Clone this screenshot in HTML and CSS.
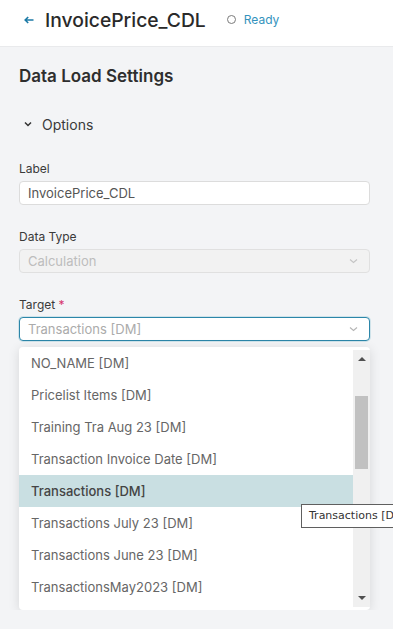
FILE: index.html
```html
<!DOCTYPE html>
<html lang="en">
<head>
  <meta charset="UTF-8" />
  <title>InvoicePrice_CDL</title>
  <link rel="stylesheet" href="styles.css">
</head>
<body>

  <!-- HEADER -->
  <div class="header">
    <svg class="back" width="10" height="8" viewBox="0 0 10 8">
      <path d="M9.5 4H1.2M4.2 1L1.2 4l3 3" fill="none" stroke="#1c7aa6" stroke-width="1.6"/>
    </svg>
    <h1 class="title">InvoicePrice_CDL</h1>
    <span class="status">
      <span class="status-dot"></span>
      Ready
    </span>
  </div>

  <!-- SETTINGS -->
  <div class="content">
    <h2 class="section-title">Data Load Settings</h2>

    <div class="options">
      <svg width="8" height="6" viewBox="0 0 8 6">
        <path d="M1 1.5l3 3 3-3" fill="none" stroke="#333" stroke-width="1.5"/>
      </svg>
      <span>Options</span>
    </div>

    <div class="field">
      <label>Label</label>
      <div class="input">InvoicePrice_CDL</div>
    </div>

    <div class="field">
      <label>Data Type</label>
      <div class="input select disabled">
        <span>Calculation</span>
        <svg width="9" height="6" viewBox="0 0 9 6"><path d="M1 1.5l3.5 3 3.5-3" fill="none" stroke="#c4c4c4" stroke-width="1.1"/></svg>
      </div>
    </div>

    <div class="field target">
      <label>Target <span class="req">*</span></label>
      <div class="input select focused">
        <span class="placeholder">Transactions [DM]</span>
        <svg width="9" height="6" viewBox="0 0 9 6"><path d="M1 1.5l3.5 3 3.5-3" fill="none" stroke="#b5b5b5" stroke-width="1.1"/></svg>
      </div>

      <div class="dropdown">
        <ul class="list">
          <li>NO_NAME [DM]</li>
          <li>Pricelist Items [DM]</li>
          <li>Training Tra Aug 23 [DM]</li>
          <li>Transaction Invoice Date [DM]</li>
          <li class="active">Transactions [DM]</li>
          <li>Transactions July 23 [DM]</li>
          <li>Transactions June 23 [DM]</li>
          <li>TransactionsMay2023 [DM]</li>
        </ul>
        <div class="scrollbar">
          <span class="arrow up"></span>
          <div class="track"><div class="thumb"></div></div>
          <span class="arrow down"></span>
        </div>
      </div>

      <div class="tooltip">Transactions [DM]</div>
    </div>
  </div>

</body>
</html>
```

FILE: styles.css
```css
body {
  margin: 0;
  font-family: Inter, "Noto Sans", sans-serif;
  background-color: #f3f4f6;
  color: #333;
  overflow: hidden;
}

/* Header bar */
.header {
  display: flex;
  align-items: center;
  height: 47px;
  padding: 0 0 7px 24px;
  box-sizing: border-box;
  background-color: #fff;
  border-bottom: 1px solid #e9eaec;
}

.back {
  margin-right: 11px;
}

.title {
  margin: 0;
  font-size: 19.3px;
  font-weight: 500;
  color: #2a2a2a;
}

.status {
  display: flex;
  align-items: center;
  margin-left: 21px;
  font-size: 12px;
  color: #3493bd;
}

.status-dot {
  width: 7px;
  height: 7px;
  border: 1px solid #7a7a7a;
  border-radius: 50%;
  margin-right: 8px;
}

/* Content */
.content {
  padding: 0 23px 0 19px;
}

.section-title {
  margin: 18px 0 0;
  font-size: 17px;
  font-weight: 600;
  color: #2e2e2e;
  line-height: 22px;
}

.options {
  display: flex;
  align-items: center;
  margin-top: 27px;
  height: 20px;
  font-size: 14px;
  color: #3a3a3a;
}

.options svg {
  margin: 0 10px 0 5px;
}

.field {
  margin-top: 27px;
}

.field + .field {
  margin-top: 24px;
}

.field label {
  display: block;
  font-size: 12px;
  color: #3a3a3a;
  line-height: 16px;
  margin-bottom: 4px;
}

.req {
  color: #d6336c;
}

.input {
  height: 24px;
  box-sizing: border-box;
  padding: 0 8px;
  display: flex;
  align-items: center;
  font-size: 13px;
  color: #555;
  background-color: #fff;
  border: 1px solid #dcdcdc;
  border-radius: 4px;
}

.select {
  justify-content: space-between;
  padding-right: 11px;
}

.disabled {
  background-color: #f2f2f2;
  color: #bdbdbd;
  border-color: #e0e0e0;
}

.focused {
  border-color: #2c86a9;
  box-shadow: 0 0 0 1px #cfe3ea;
}

.placeholder {
  color: #ababab;
}

/* Dropdown */
.target {
  position: relative;
}

.dropdown {
  display: flex;
  margin-top: 6px;
  height: 263px;
  background-color: #fff;
  border-radius: 4px;
  box-shadow: 0 2px 12px rgba(0, 0, 0, 0.12);
  overflow: hidden;
}

.list {
  flex: 1;
  list-style: none;
  margin: 0;
  padding: 0;
}

.list li {
  height: 32px;
  line-height: 32px;
  padding-left: 12px;
  font-size: 13px;
  color: #666;
}

.list li.active {
  background-color: #c9dfe2;
  color: #444;
  font-weight: 500;
}

.scrollbar {
  width: 17px;
  margin: 3px 0 3px;
  display: flex;
  flex-direction: column;
  align-items: center;
  background-color: #f0f0f0;
}

.arrow {
  width: 0;
  height: 0;
  margin: 7px 0;
  border-left: 4px solid transparent;
  border-right: 4px solid transparent;
}

.arrow.up {
  border-bottom: 4px solid #505050;
}

.arrow.down {
  border-top: 4px solid #505050;
}

.track {
  flex: 1;
  width: 100%;
  display: flex;
  justify-content: center;
}

.thumb {
  width: 13px;
  height: 73px;
  margin-top: 28px;
  background-color: #c1c1c1;
}

/* Native-like tooltip */
.tooltip {
  position: absolute;
  left: 282px;
  top: 207px;
  width: 110px;
  height: 24px;
  box-sizing: border-box;
  padding: 0 0 0 7px;
  line-height: 22px;
  white-space: nowrap;
  overflow: hidden;
  font-family: "DejaVu Sans", sans-serif;
  font-size: 11px;
  color: #333;
  background-color: #fff;
  border: 1px solid #5f5f5f;
}
```
